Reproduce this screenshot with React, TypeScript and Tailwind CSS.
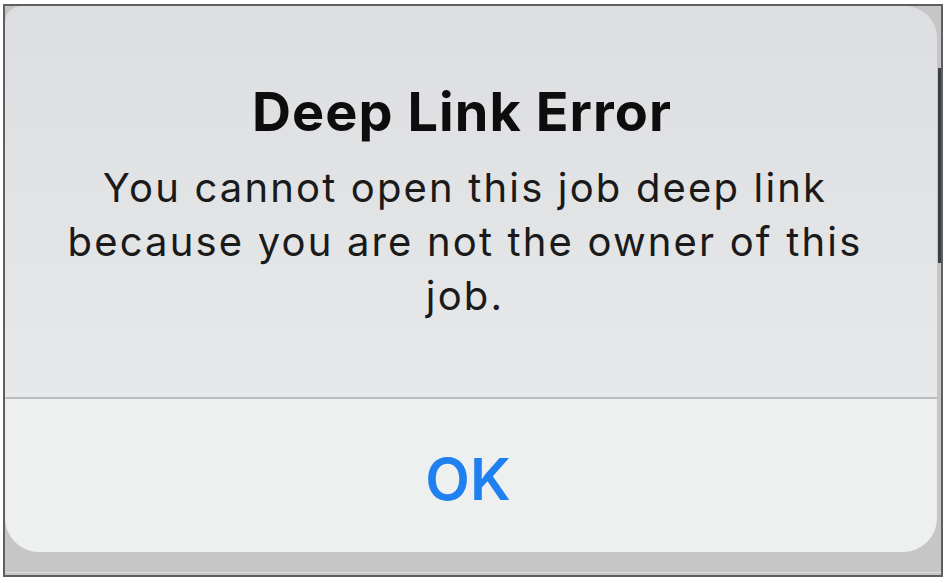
import React from 'react';

const App: React.FC = () => {
  return (
    <div className="w-[951px] h-[583px] bg-white pl-[3px] pt-[4px]" style={{ fontFamily: 'Inter, "Noto Sans", sans-serif' }}>
      <div className="relative flex flex-col w-[940px] h-[573px] border-2 border-[#5f5f5f] bg-[#c6c6c6]">
        {/* alert */}
        <div className="flex flex-col w-[932px] h-[546px] overflow-hidden rounded-tl-[16px] rounded-tr-[32px] rounded-b-[34px]">
          <div className="flex flex-col items-center h-[391px] pt-[79px] pl-[40px] pr-[52px] bg-gradient-to-b from-[#dcdee1] to-[#e7e8e9]">
            <h1 className="text-[54px] leading-[54px] font-bold text-[#0d0d0d] tracking-[0.02em] -ml-[6px]">
              Deep Link Error
            </h1>
            <p className="mt-[22px] w-[830px] text-center text-[40px] leading-[54px] text-[#1a1a1a] tracking-[0.054em]">
              You cannot open this job deep link because you are not the owner of this job.
            </p>
          </div>
          <div className="h-[2px] bg-[#b9bcbe]" />
          <button className="flex-1 flex justify-center items-start pt-[51px] pr-[6px] bg-[#eeefef]">
            <span className="text-[58px] leading-none font-semibold text-[#1f80ef]">OK</span>
          </button>
        </div>
        <div className="mt-auto mb-[2px] h-px bg-[#dedede]" />
        {/* scroll indicator on the right edge */}
        <div className="absolute right-0 top-[62px] w-[3px] h-[195px] bg-[#3b3e44]" />
      </div>
    </div>
  );
};

export default App;
